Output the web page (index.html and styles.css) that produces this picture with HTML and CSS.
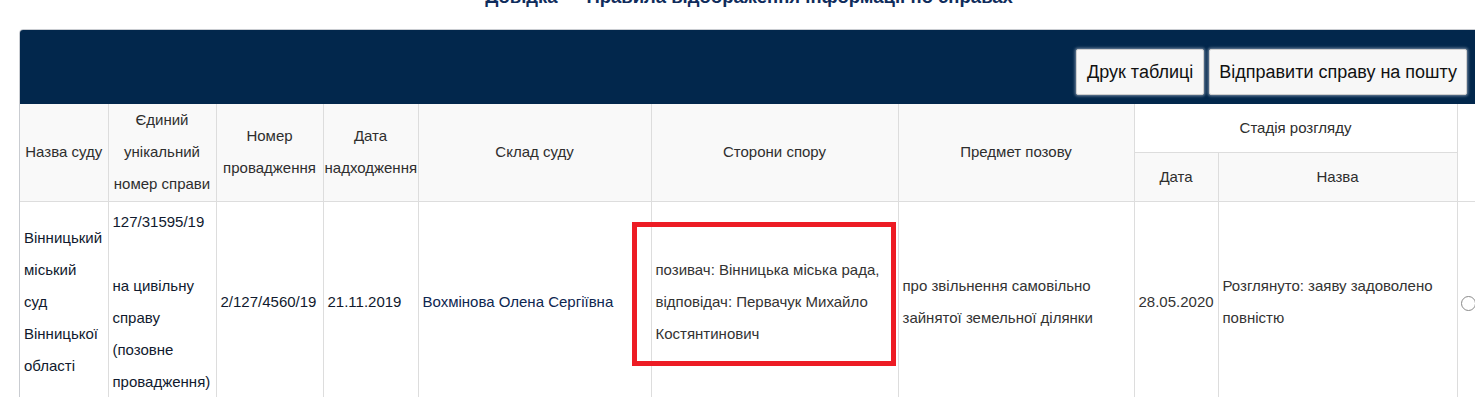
FILE: index.html
```html
<!DOCTYPE html>
<html lang="uk">
<head>
<meta charset="utf-8">
<title>Довідка</title>
<link rel="stylesheet" href="styles.css">
</head>
<body>
<div class="page">
  <h2 class="title">Довідка — Правила відображення інформації по справах</h2>
  <div class="panel">
    <div class="panel-head">
      <button class="btn">Друк таблиці</button>
      <button class="btn">Відправити справу на пошту</button>
    </div>
    <table class="cases">
      <colgroup>
        <col style="width:88px">
        <col style="width:108px">
        <col style="width:107px">
        <col style="width:95px">
        <col style="width:233px">
        <col style="width:247px">
        <col style="width:236px">
        <col style="width:84px">
        <col style="width:239px">
        <col style="width:21px">
      </colgroup>
      <thead>
        <tr class="hrow1">
          <th rowspan="2">Назва суду</th>
          <th rowspan="2">Єдиний унікальний номер справи</th>
          <th rowspan="2">Номер провадження</th>
          <th rowspan="2">Дата надходження</th>
          <th rowspan="2">Склад суду</th>
          <th rowspan="2">Сторони спору</th>
          <th rowspan="2">Предмет позову</th>
          <th colspan="2" class="white">Стадія розгляду</th>
          <th rowspan="2" class="white"></th>
        </tr>
        <tr class="hrow2">
          <th>Дата</th>
          <th>Назва</th>
        </tr>
      </thead>
      <tbody>
        <tr>
          <td class="dark">Вінницький міський суд Вінницької області</td>
          <td class="dark">127/31595/19<br><br>на цивільну справу (позовне провадження)</td>
          <td class="dark">2/127/4560/19</td>
          <td class="dark">21.11.2019</td>
          <td class="navy">Вохмінова Олена Сергіївна</td>
          <td>позивач: Вінницька міська рада, відповідач: Первачук Михайло Костянтинович</td>
          <td>про звільнення самовільно зайнятої земельної ділянки</td>
          <td>28.05.2020</td>
          <td>Розглянуто: заяву задоволено повністю</td>
          <td class="pick"><span class="radio"></span></td>
        </tr>
      </tbody>
    </table>
  </div>
  <div class="highlight"></div>
</div>
</body>
</html>
```

FILE: styles.css
```css
html, body {
  margin: 0;
  padding: 0;
  overflow: hidden;
  background: #fff;
}

body {
  font-family: "Liberation Sans", Arial, sans-serif;
  font-size: 15px;
  color: #333;
}

.page {
  position: relative;
  display: flow-root;
  padding: 0 0 0 19px;
  width: 1460px;
}

.title {
  margin: -13px 0 22px;
  font-size: 18.5px;
  line-height: 20px;
  font-weight: bold;
  color: #0f2c5c;
  text-align: center;
}

.panel {
  border: 1px solid #c9ccd1;
  border-radius: 4px 4px 0 0;
  overflow: hidden;
  background: #fff;
}

.panel-head {
  background: #02274c;
  height: 74px;
  box-sizing: border-box;
  padding: 19px 11px 9px;
  display: flex;
  justify-content: flex-end;
  align-items: flex-start;
  gap: 5px;
}

.btn {
  height: 46px;
  padding: 0 10px;
  font-family: "Liberation Sans", Arial, sans-serif;
  font-size: 18px;
  color: #111;
  background: #f7f7f7;
  border: 1px solid #cfcfcf;
  border-radius: 2px;
  box-shadow: 0 0 3px 1px rgba(210, 215, 225, 0.55);
}

.btn + .btn {
  padding: 0 9px;
}

.cases {
  border-collapse: collapse;
  table-layout: fixed;
  width: 1458px;
}

.cases th,
.cases td {
  border: 1px solid #dddddd;
  padding: 0 4px;
  line-height: 32px;
}

.cases tr:first-child th {
  border-top: 0;
}

.cases th:first-child,
.cases td:first-child {
  border-left: 0;
}

.cases th {
  background: #f9f9f9;
  font-weight: normal;
  color: #2e2e2e;
  text-align: center;
  vertical-align: middle;
  padding: 0 1px;
}

.cases th.white {
  background: #fff;
}

.hrow1 {
  height: 48px;
}

.hrow2 {
  height: 49px;
}

.cases td {
  vertical-align: middle;
  padding-top: 4px;
  padding-bottom: 6px;
  text-align: left;
}

.cases td.dark {
  color: #101a2e;
}

.cases td.navy {
  color: #0d2650;
}

.cases td.pick {
  padding: 0 0 0 3px;
}

.radio {
  display: inline-block;
  width: 13px;
  height: 13px;
  border: 1px solid #8a8a8a;
  border-radius: 50%;
  vertical-align: middle;
  background: #fff;
}

.highlight {
  position: absolute;
  left: 632px;
  top: 222px;
  width: 264px;
  height: 144px;
  box-sizing: border-box;
  border: 5px solid #ed1c24;
}
```
